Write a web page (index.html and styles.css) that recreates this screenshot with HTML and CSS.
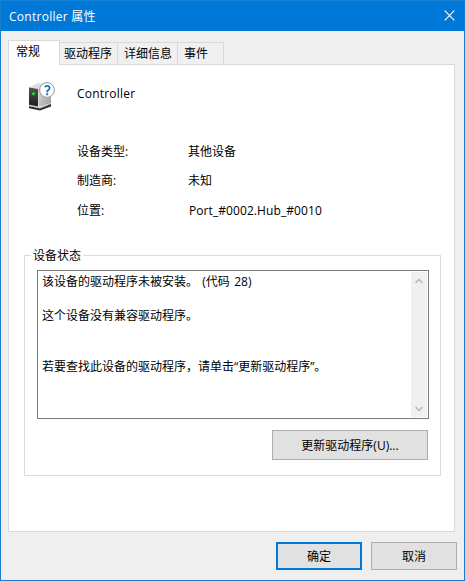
FILE: index.html
```html
<!DOCTYPE html>
<html lang="zh-CN">
<head>
<meta charset="utf-8">
<title>Controller 属性</title>
<link rel="stylesheet" href="styles.css">
</head>
<body>
<main class="window">
  <header class="titlebar">
    <h1 class="title">Controller 属性</h1>
    <svg class="close" width="11" height="11" viewBox="0 0 11 11"><path d="M.7.7l9.6 9.6M10.3.7L.7 10.3" stroke="#fff" stroke-width="1.1" fill="none"/></svg>
  </header>
  <nav class="tabs">
    <span class="tab tab-active">常规</span>
    <span class="tab tab-driver">驱动程序</span>
    <span class="tab tab-details">详细信息</span>
    <span class="tab tab-events">事件</span>
  </nav>
  <section class="panel">
    <div class="device">
      <svg class="device-icon" width="30" height="32" viewBox="0 0 30 32">
        <defs>
          <linearGradient id="side" x1="0" y1="0" x2="1" y2="1"><stop offset="0" stop-color="#e4e4e4"/><stop offset="1" stop-color="#9a9a9a"/></linearGradient>
          <linearGradient id="front" x1="0" y1="0" x2="0" y2="1"><stop offset="0" stop-color="#555"/><stop offset="1" stop-color="#1c1c1c"/></linearGradient>
        </defs>
        <path d="M2 25l11 2.2 11-4.4v2.6l-11 4.2-11-2.4z" fill="#303030"/>
        <path d="M2.2 24.7l10.8 2.3 10.8-4.3" fill="none" stroke="#aaa" stroke-width=".8"/>
        <path d="M2 6.5L11 2l13 2v17.5L12 25z" fill="#dedede"/>
        <path d="M11 8l13-4v18l-12 4z" fill="url(#side)"/>
        <path d="M2 6.5L11 8v17.5l-9-1.7z" fill="url(#front)"/>
        <circle cx="6.5" cy="12.7" r="2.3" fill="#16751d"/>
        <circle cx="6.5" cy="12.7" r="1.2" fill="#45ef45"/>
        <circle cx="20" cy="9" r="7.4" fill="#fff" stroke="#999" stroke-width="1"/>
        <path d="M17.8 6.1q.9-1.2 2.4-1.2 2.4 0 2.4 2 0 1.2-1.3 2.1-1.1.7-1.1 1.7v.5" fill="none" stroke="#1d73b8" stroke-width="1.8"/>
        <rect x="19.2" y="12.2" width="2" height="2" fill="#1d73b8"/>
      </svg>
      <span class="device-name">Controller</span>
    </div>
    <dl class="facts">
      <dt>设备类型:</dt><dd>其他设备</dd>
      <dt>制造商:</dt><dd>未知</dd>
      <dt>位置:</dt><dd class="location">Port_#0002.Hub_#0010</dd>
    </dl>
    <section class="group">
      <h2 class="group-title">设备状态</h2>
      <div class="status">
        <div class="status-text">
          <p class="code-line">该设备的驱动程序未被安装。 (代码 28)</p>
          <p class="gap-one">这个设备没有兼容驱动程序。</p>
          <p class="gap-two">若要查找此设备的驱动程序，请单击“更新驱动程序”。</p>
        </div>
        <div class="scrollbar">
          <svg width="8" height="6" viewBox="0 0 8 6"><path d="M.6 4.8L4 1.4l3.4 3.4" fill="none" stroke="#bdbdbd" stroke-width="1.8"/></svg>
          <svg width="8" height="6" viewBox="0 0 8 6"><path d="M.6 1.2L4 4.6l3.4-3.4" fill="none" stroke="#bdbdbd" stroke-width="1.8"/></svg>
        </div>
      </div>
      <button class="button button-update">更新驱动程序(U)...</button>
    </section>
  </section>
  <footer class="actions">
    <button class="button button-default">确定</button>
    <button class="button">取消</button>
  </footer>
</main>
</body>
</html>
```

FILE: styles.css
```css
* { box-sizing: border-box; margin: 0; padding: 0; }
body, button {
  font: 12px/17px "Open Sans", "Noto Sans CJK SC", sans-serif;
  color: #000;
}
.window {
  width: 465px;
  height: 581px;
  background: #efefef;
  border: 1px solid #1a7fcb;
  border-top: 0;
  overflow: hidden;
}
.titlebar {
  height: 31px;
  padding: 0 9px 0 8px;
  display: flex;
  align-items: center;
  justify-content: space-between;
  background: #0078d7;
  border-top: 1px solid #1683d8;
  color: #fff;
}
.title { font-size: 12px; font-weight: 400; letter-spacing: .27px; }
.close { display: block; position: relative; top: -1px; }
.tabs {
  height: 33px;
  margin: 0 0 0 7px;
  display: flex;
  align-items: flex-end;
}
.tab {
  height: 22px;
  padding-top: 2px;
  border: 1px solid #d9d9d9;
  border-width: 1px 1px 0 0;
  background: #f0f0f0;
}
.tab-active {
  width: 52px;
  height: 25px;
  padding: 2px 0 0 7px;
  margin-bottom: -1px;
  border-left-width: 1px;
  background: #fff;
  z-index: 1;
}
.tab-driver { width: 58px; padding-left: 4px; }
.tab-details { width: 60px; padding-left: 6px; }
.tab-events { width: 46px; padding-left: 6px; }
.panel {
  width: 447px;
  height: 468px;
  margin-left: 7px;
  padding: 15px 13px 0 15px;
  background: #fff;
  border: 1px solid #d9d9d9;
}
.device { height: 61px; display: flex; }
.device-icon { margin: 1px 0 0 3px; }
.device-name { margin: 5px 0 0 20px; letter-spacing: .2px; }
.facts {
  display: grid;
  grid-template-columns: 111px 1fr;
  grid-template-rows: 29px 30px 24px;
  margin: 2px 0 0 53px;
}
.location { padding-left: 1px; letter-spacing: .08px; }
.group {
  width: 417px;
  height: 221px;
  margin-top: 29px;
  padding: 0 12px;
  border: 1px solid #dcdcdc;
}
.group-title {
  width: max-content;
  margin: -9px 0 6px -6px;
  padding: 0 2px;
  background: #fff;
  font-size: 12px;
  font-weight: 400;
}
.status {
  width: 392px;
  height: 149px;
  border: 1px solid #7a7a7a;
  padding: 1px;
  display: flex;
  justify-content: space-between;
}
.status-text { padding: 1px 0 0 3px; white-space: nowrap; }
.code-line { word-spacing: 1.2px; }
.gap-one { margin-top: 17px; }
.gap-two { margin-top: 34px; }
.scrollbar {
  width: 16px;
  background: #f0f0f0;
  padding: 6px 0 5px;
  display: flex;
  flex-direction: column;
  align-items: center;
  justify-content: space-between;
}
.button {
  width: 86px;
  height: 28px;
  background: #e1e1e1;
  border: 1px solid #adadad;
}
.button-update {
  display: block;
  width: 156px;
  height: 30px;
  margin: 11px 0 0 auto;
}
.button-default { border: 2px solid #0078d7; }
.actions {
  display: flex;
  justify-content: flex-end;
  gap: 9px;
  padding: 10px 7px 0 0;
}
```
